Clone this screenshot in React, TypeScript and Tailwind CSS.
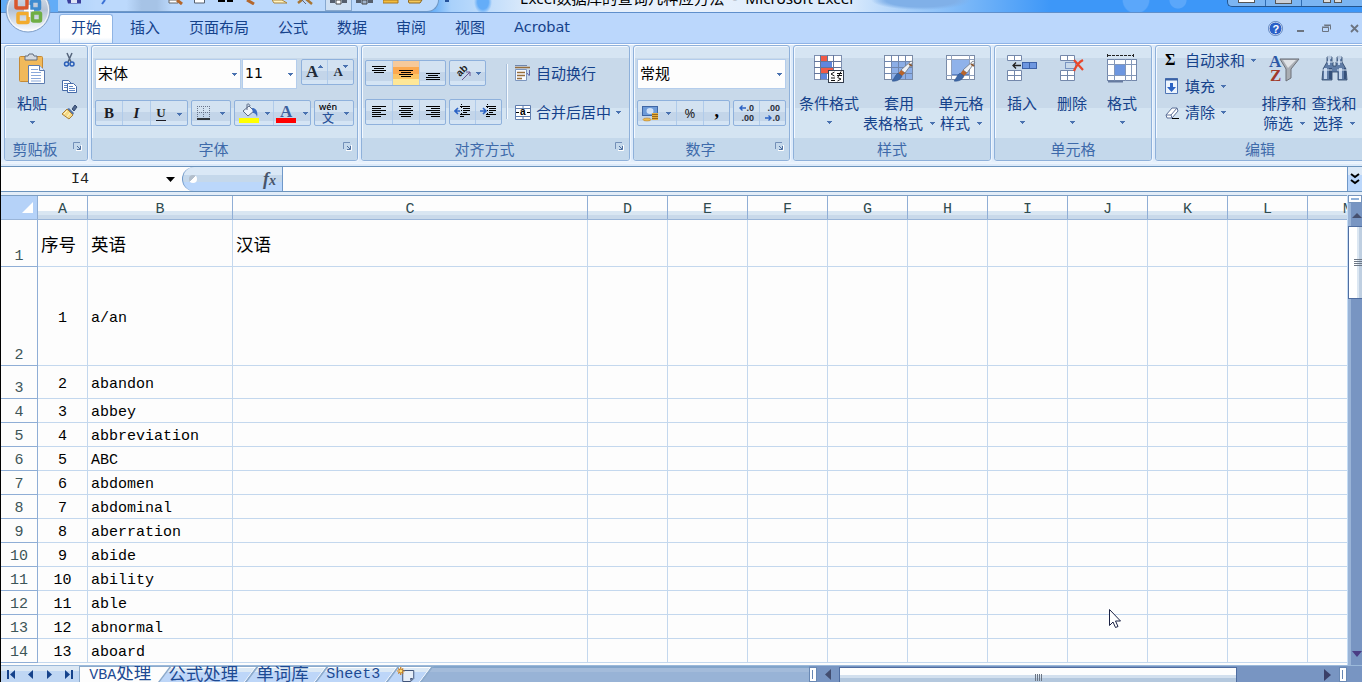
import clsx from "clsx";
import type { ReactNode } from "react";

const TABS = ["开始", "插入", "页面布局", "公式", "数据", "审阅", "视图", "Acrobat"];

const COLUMNS = [
  { name: "A", width: 50 },
  { name: "B", width: 145 },
  { name: "C", width: 355 },
  { name: "D", width: 80 },
  { name: "E", width: 80 },
  { name: "F", width: 80 },
  { name: "G", width: 80 },
  { name: "H", width: 80 },
  { name: "I", width: 80 },
  { name: "J", width: 80 },
  { name: "K", width: 80 },
  { name: "L", width: 80 },
  { name: "M", width: 80 },
];

const ROWS = [
  { height: 47, cells: ["序号", "英语", "汉语"] },
  { height: 99, cells: ["1", "a/an"] },
  { height: 33, cells: ["2", "abandon"] },
  { height: 24, cells: ["3", "abbey"] },
  { height: 24, cells: ["4", "abbreviation"] },
  { height: 24, cells: ["5", "ABC"] },
  { height: 24, cells: ["6", "abdomen"] },
  { height: 24, cells: ["7", "abdominal"] },
  { height: 24, cells: ["8", "aberration"] },
  { height: 24, cells: ["9", "abide"] },
  { height: 24, cells: ["10", "ability"] },
  { height: 24, cells: ["11", "able"] },
  { height: 24, cells: ["12", "abnormal"] },
  { height: 24, cells: ["13", "aboard"] },
];

function Arrow({ className }: { className?: string }) {
  return (
    <svg width="5" height="3" viewBox="0 0 5 3" className={clsx("shrink-0", className)} shapeRendering="crispEdges">
      <path d="M0 0h5v1H0zM1 1h3v1H1zM2 2h1v1H2z" fill="#4a72b0" />
    </svg>
  );
}

function Group({
  label,
  className,
  launcher,
  children,
}: {
  label: string;
  className: string;
  launcher?: boolean;
  children: ReactNode;
}) {
  return (
    <section
      className={clsx(
        "flex h-[116px] shrink-0 flex-col overflow-hidden rounded-[3px] border border-[#8fb1da] bg-[linear-gradient(#d6e5f3_0_12px,#c8d9ea_12px_62px,#d4e4f2_62px)] shadow-[inset_1px_1px_0_#f4f9ff,1px_1px_0_#eef5fd]",
        className,
      )}
    >
      <div className="h-[92px]">{children}</div>
      <div className="relative flex h-[22px] items-center justify-center bg-[#c4d8eb] text-[#3e6aaa]">
        <span className={launcher ? "pr-[22px]" : ""}>{label}</span>
        {launcher && (
          <svg className="absolute right-[5px] top-[4px]" width="9" height="9" viewBox="0 0 9 9" fill="none">
            <path d="M.5 7V.5H7" stroke="#7390b8" />
            <path d="M8.500 3v5.500H3" stroke="#fff" />
            <path d="M4 4l3 3M7.500 4v3.500H4" stroke="#4f70a0" />
          </svg>
        )}
      </div>
    </section>
  );
}

function ButtonBox({ className, children }: { className?: string; children: ReactNode }) {
  return (
    <div
      className={clsx(
        "flex h-[26px] shrink-0 overflow-hidden rounded-[2px] border border-[#8fb1dc] bg-[linear-gradient(#d3e2f1_0_11px,#c3d5e9_11px_20px,#d4e4f4_20px)] [&>*+*]:border-l [&>*+*]:border-[#b0cbea]",
        className,
      )}
    >
      {children}
    </div>
  );
}

function Cell({ className, children }: { className: string; children: ReactNode }) {
  return <span className={clsx("flex items-center justify-center", className)}>{children}</span>;
}

function Lines({ rows, y = 3 }: { rows: [number, number][]; y?: number }) {
  return (
    <svg width="16" height="18" viewBox="0 0 16 18" shapeRendering="crispEdges">
      {rows.map(([x, w], i) => (
        <rect key={i} x={x} y={y + i * 2} width={w} height="1" fill="#000" />
      ))}
    </svg>
  );
}

function IndentIcon({ flip }: { flip?: boolean }) {
  return (
    <svg width="17" height="18" viewBox="0 0 17 18" fill="none">
      <path d="M6 3.500h10M9 5.500h7M9 7.500h7M9 9.500h4M6 11.500h10M6 13.500h4" stroke="#000" />
      <path d="M7.500 1v15" stroke="#000" strokeDasharray="1 2" />
      <path d={flip ? "M0 8h5M3 5l3 3-3 3" : "M6 8H1M4 5L1 8l3 3"} stroke="#2b62c4" strokeWidth="1.600" />
    </svg>
  );
}

function BigButton({
  icon,
  lines,
  arrowBelow,
  className,
}: {
  icon: ReactNode;
  lines: string[];
  arrowBelow?: boolean;
  className: string;
}) {
  return (
    <div className={clsx("flex shrink-0 flex-col items-center pt-[7px] leading-5 whitespace-nowrap", className)}>
      <div className="mb-[8px] h-[32px]">{icon}</div>
      <div>{lines[0]}</div>
      <div className="flex h-5 items-center justify-center">
        {arrowBelow ? <Arrow className="-mt-0.5" /> : (
          <>
            {lines[1]}
            <Arrow className="ml-[7px]" />
          </>
        )}
      </div>
    </div>
  );
}

function Brush() {
  return (
    <g>
      <path d="M28 8l2 1-8 11-4-3z" fill="#eef1f5" stroke="#6b7480" strokeWidth=".8" />
      <path d="M26 11l3 2" stroke="#8b5a34" strokeWidth="2" />
      <path d="M18 17l4 3-3 3-4-2z" fill="#b8642b" />
      <path d="M15 20l4 3c-1 3-5 6-10 5 2-2 3-6 6-8z" fill="#3f69a8" stroke="#2b4f88" strokeWidth=".5" />
    </g>
  );
}

function CondFormatIcon() {
  return (
    <svg width="32" height="32" viewBox="0 0 32 32" fill="none" shapeRendering="crispEdges">
      <rect x="1.500" y="2.500" width="27" height="24" fill="#fff" stroke="#7d8fb0" />
      <path d="M8 3h6v6H8zM8 15h12v5H8z" fill="#f05a45" />
      <path d="M8 9h11v6H8zM8 21h6v5H8z" fill="#5f86dd" />
      <path d="M1 8.500h27M1 14.500h27M1 20.500h27M7.500 2v25M14.500 2v7M20.500 2v25" stroke="#62759b" />
      <rect x="15.500" y="17.500" width="15" height="12" fill="#fff" stroke="#333d4d" />
      <g shapeRendering="auto" stroke="#111">
        <path d="M21.500 19l-3.500 2 3.500 2M18 25h4M18 27.500h4M24 20.500h5M24 22.500h5M28 18.500l-3 5.500M24.500 24.500l3.500 1.500-3.500 2" />
      </g>
    </svg>
  );
}

function TableFormatIcon() {
  return (
    <svg width="32" height="32" viewBox="0 0 32 32" fill="none">
      <rect x="1.500" y="2.500" width="28" height="24" fill="#fff" stroke="#7b8ca8" />
      <path d="M8 8h21v18H8z" fill="#8caee6" />
      <path d="M1 8.500h28M1 14.500h28M1 20.500h28M8.500 2v25M15.500 2v25M22.500 2v25" stroke="#6f86ae" />
      <Brush />
    </svg>
  );
}

function CellStyleIcon() {
  return (
    <svg width="32" height="32" viewBox="0 0 32 32" fill="none">
      <rect x="1.500" y="2.500" width="28" height="24" fill="#fff" stroke="#7b8ca8" />
      <rect x="6.500" y="6.500" width="18" height="15" fill="#8fb2ea" stroke="#5d83c6" />
      <path d="M1 6.500h28M1 22.500h28M6.500 2v25M24.500 2v25" stroke="#8fa0bd" />
      <Brush />
    </svg>
  );
}

function InsertIcon() {
  return (
    <svg width="32" height="32" viewBox="0 0 32 32" fill="none">
      <path d="M1.500 2.500h14v5h-14zM1.500 17.500h14v10h-14z" fill="#fff" stroke="#7488ab" />
      <path d="M1 22.500h14M8.500 2v6M8.500 17v11" stroke="#7488ab" />
      <rect x="16.500" y="9.500" width="14" height="6" fill="#6e97e0" stroke="#3d62a8" />
      <path d="M23.500 9v7" stroke="#3d62a8" />
      <path d="M15 12.500H7M10 9.500l-3 3 3 3" stroke="#222" strokeWidth="1.300" />
    </svg>
  );
}

function DeleteIcon() {
  return (
    <svg width="32" height="32" viewBox="0 0 32 32" fill="none">
      <path d="M4.500 2.500h14v5h-14zM4.500 17.500h14v10h-14z" fill="#fff" stroke="#7488ab" />
      <path d="M4 22.500h14M11.500 2v6M11.500 17v11" stroke="#7488ab" />
      <path d="M9.500 9.500h10v6h-10z" stroke="#2b4f98" strokeDasharray="1 1" />
      <path d="M18 7l9 10M27 7c-4 2-7 6-9 11" stroke="#e8472b" strokeWidth="2.200" />
    </svg>
  );
}

function FormatIcon() {
  return (
    <svg width="32" height="32" viewBox="0 0 32 32" fill="none">
      <path d="M1.500 1v4M27.500 1v4M2 2.500h25" stroke="#222" strokeDasharray="3 1" />
      <rect x="1.500" y="6.500" width="29" height="21" fill="#fff" stroke="#7488ab" />
      <rect x="9" y="12" width="10" height="10" fill="#6e97e0" />
      <path d="M1 11.500h29M1 22.500h29M8.500 6v23M19.500 6v22M25.500 6v22" stroke="#8498b9" />
      <path d="M2 28.500h15" stroke="#667b9f" strokeWidth="2" />
    </svg>
  );
}

function SortIcon() {
  return (
    <svg width="32" height="32" viewBox="0 0 32 32">
      <path d="M12 6h19l-8 10v9l-5 3V16z" fill="#a9adb3" stroke="#6d7179" />
      <path d="M15 7h13l-8 8z" fill="#dfe2e6" />
      <text x="1" y="14" fontFamily="Liberation Serif, serif" fontSize="17" fontWeight="700" fill="#2c58a5">A</text>
      <text x="2" y="28" fontFamily="Liberation Serif, serif" fontSize="17" fontWeight="700" fill="#a13a2b">Z</text>
    </svg>
  );
}

function BinocularsIcon() {
  return (
    <svg width="32" height="32" viewBox="0 0 32 32">
      <path d="M9 4h5v5h1v4h3V9h1V4h5v5l4 7 1 11h-9v-8h-6v8H4l1-11 4-7z" fill="#5f7ca6" stroke="#2c4468" strokeWidth=".8" />
      <path d="M6 15h3v11H6zM21 15h3v11h-3zM10 6h2v6h-2zM20 6h2v6h-2z" fill="#c3d5ec" />
      <path d="M11 15h3v11h-3zM26 15h2v11h-2z" fill="#34507a" />
      <path d="M4 17h10M19 17h10M9 9h6M18 9h6" stroke="#dce7f5" />
      <circle cx="11.500" cy="4.500" r="2" fill="#b8c9df" />
      <circle cx="21.500" cy="4.500" r="2" fill="#b8c9df" />
    </svg>
  );
}

function PasteIcon() {
  return (
    <svg width="32" height="32" viewBox="0 0 32 32">
      <rect x="3.500" y="3.500" width="23" height="25" rx="1" fill="#f1b95a" stroke="#c58a35" />
      <path d="M9 3h3l1-2h4l1 2h3v4H9z" fill="#d3d9e0" stroke="#636d7c" />
      <path d="M12.500 12.500h11l5 5v13h-16z" fill="#fff" stroke="#5d7cb0" />
      <path d="M23.500 12.500v5h5" fill="#dce8fa" stroke="#5d7cb0" />
      <path d="M15 16.500h7M15 19.500h10M15 22.500h10M15 25.500h10M15 28h10" stroke="#8aa9da" />
    </svg>
  );
}

function ClipboardGroup() {
  return (
    <Group label="剪贴板" launcher className="w-[84px] [&_span.pr-\[22px\]]:pr-[22px]">
      <div className="flex">
        <BigButton icon={<PasteIcon />} lines={["粘贴"]} arrowBelow className="w-[54px]" />
        <div className="flex flex-col gap-[9px] pt-[6px] pl-[2px]">
          <svg width="17" height="17" viewBox="0 0 17 17" fill="none">
            <path d="M6 1l4 9M11 1L7 10" stroke="#55657c" strokeWidth="1.500" />
            <circle cx="5.500" cy="12" r="2" stroke="#2b5fb8" strokeWidth="1.500" />
            <circle cx="11" cy="12" r="2" stroke="#2b5fb8" strokeWidth="1.500" />
          </svg>
          <svg width="17" height="17" viewBox="0 0 17 17">
            <path d="M1.500 2.500h6l3 3v7h-9z" fill="#fff" stroke="#476ba8" />
            <path d="M6.500 5.500h6l3 3v6h-9z" fill="#fff" stroke="#476ba8" />
            <path d="M3 5.500h3M3 7.500h3M3 9.500h3M8 8.500h4M8 10.500h6M8 12.500h6" stroke="#5f86c4" />
          </svg>
          <svg width="17" height="17" viewBox="0 0 17 17">
            <path d="M11 5l3-4 2 2-3 4z" fill="#50678e" stroke="#344a70" />
            <path d="M8 4l5 5-1 2-6-6z" fill="#5775a6" />
            <path d="M6 5l6 6-4 4-7-5z" fill="#f4d985" stroke="#a97d38" />
            <path d="M3 10l3-3M6 13l3-4" stroke="#fff4c8" />
          </svg>
        </div>
      </div>
    </Group>
  );
}

function FontGroup() {
  return (
    <Group label="字体" launcher className="w-[267px]">
      <div className="flex h-[42px] items-start pl-[3px] pt-[13px]">
        <div className="flex h-[30px] w-[146px] items-center justify-between border border-[#b4cdec] bg-[#fdfdfd] pl-[2px] pr-[3px] pb-[2px] text-black">
          宋体
          <Arrow className="mt-[3px]" />
        </div>
        <div className="ml-px flex h-[30px] w-[55px] items-center justify-between border border-[#b4cdec] bg-[#fdfdfd] pl-[2px] pr-[3px] pb-[2px] font-['DejaVu_Sans',sans-serif] text-[14px] text-black">
          11
          <Arrow className="mt-[3px]" />
        </div>
        <ButtonBox className="ml-1 w-[53px]">
          <Cell className="w-[26px] font-['Liberation_Serif',serif] text-[17px] font-bold text-[#222b38]">
            A<Arrow className="mb-3 rotate-180" />
          </Cell>
          <Cell className="w-[26px] font-['Liberation_Serif',serif] text-[13px] font-bold text-[#222b38]">
            A<Arrow className="mb-3" />
          </Cell>
        </ButtonBox>
      </div>
      <div className="flex items-start gap-[3px] pl-[3px] pt-[12px]">
        <ButtonBox className="w-[93px] font-['Liberation_Serif',serif] text-[16px] font-bold text-[#1c1c24]">
          <Cell className="w-[26px] text-[15px]">B</Cell>
          <Cell className="w-[28px] text-[15px] italic">I</Cell>
          <Cell className="w-[37px] gap-[11px]">
            <span className="border-b border-[#1c1c24] text-[13px] leading-[14px]">U</span>
            <Arrow className="mt-0.5" />
          </Cell>
        </ButtonBox>
        <ButtonBox className="w-[40px]">
          <Cell className="w-full gap-[9px]">
            <svg width="14" height="14" viewBox="0 0 14 14">
              <path d="M.5 0v12M6.500 0v12M12.500 0v12M0 .5h13M0 6.500h13" stroke="#69758c" strokeDasharray="1 1" />
              <path d="M0 13h13" stroke="#000" strokeWidth="1.500" />
            </svg>
            <Arrow />
          </Cell>
        </ButtonBox>
        <ButtonBox className="w-[77px]">
          <Cell className="w-[38px] gap-[6px]">
            <svg width="21" height="20" viewBox="0 0 21 20">
              <path d="M5 8l6-5 5 5-6 5z" fill="#eef3fa" stroke="#5c6b86" />
              <path d="M9 7V2c0-2 3-1 3 1" fill="none" stroke="#5c6b86" />
              <path d="M14 5c5 0 6 5 5 9-1-3-2-4-4-4z" fill="#3f6ec0" />
              <path d="M1 15h20v5H1z" fill="#ff0" />
            </svg>
            <Arrow />
          </Cell>
          <Cell className="w-[37px] gap-[7px]">
            <svg width="20" height="20" viewBox="0 0 20 20">
              <text x="4" y="14" fontFamily="Liberation Serif, serif" fontSize="17" fontWeight="700" fill="#3d5f9c">A</text>
              <path d="M0 15h20v5H0z" fill="red" />
            </svg>
            <Arrow />
          </Cell>
        </ButtonBox>
        <ButtonBox className="w-[40px]">
          <Cell className="w-full gap-[7px]">
            <span className="flex flex-col items-center text-[12px] font-medium leading-[14px] text-[#2b5399]">
              <span className="font-['Noto_Sans',sans-serif] text-[9px] leading-[9px] text-black">wén</span>文
            </span>
            <Arrow />
          </Cell>
        </ButtonBox>
      </div>
    </Group>
  );
}

function AlignGroup() {
  return (
    <Group label="对齐方式" launcher className="w-[269px]">
      <div className="flex">
        <div className="w-[144px] pl-[3px] pt-[14px]">
          <div className="flex gap-[3px]">
            <ButtonBox className="w-[81px]">
              <Cell className="w-[26px]"><Lines rows={[[1, 14], [3, 10], [1, 14], [3, 10]]} y={2} /></Cell>
              <Cell className="w-[27px] bg-[linear-gradient(#f6c99a_0_6px,#fca94f_6px_13px,#fcc564_13px_18px,#fee797_18px)]">
                <Lines rows={[[1, 14], [3, 10], [1, 14], [3, 10]]} y={6} />
              </Cell>
              <Cell className="w-[26px]"><Lines rows={[[1, 14], [3, 10], [1, 14], [1, 14]]} y={9} /></Cell>
            </ButtonBox>
            <ButtonBox className="w-[37px]">
              <Cell className="w-full gap-[4px]">
                <svg width="17" height="18" viewBox="0 0 17 18">
                  <text transform="translate(5 13) rotate(-45)" fontFamily="Liberation Sans, sans-serif" fontSize="10" fontWeight="700" fill="#222">ab</text>
                  <path d="M7 16l8-8M15 12V8h-4" fill="none" stroke="#6a5590" />
                </svg>
                <Arrow />
              </Cell>
            </ButtonBox>
          </div>
          <div className="mt-[13px] flex gap-[3px]">
            <ButtonBox className="w-[81px]">
              <Cell className="w-[26px]"><Lines rows={[[1, 14], [1, 9], [1, 14], [1, 9], [1, 14], [1, 9]]} /></Cell>
              <Cell className="w-[27px]"><Lines rows={[[1, 14], [3, 10], [1, 14], [3, 10], [1, 14], [3, 10]]} /></Cell>
              <Cell className="w-[26px]"><Lines rows={[[1, 14], [6, 9], [1, 14], [6, 9], [1, 14], [6, 9]]} /></Cell>
            </ButtonBox>
            <ButtonBox className="w-[53px]">
              <Cell className="w-[26px]"><IndentIcon /></Cell>
              <Cell className="w-[26px]"><IndentIcon flip /></Cell>
            </ButtonBox>
          </div>
        </div>
        <div className="mt-[18px] h-[55px] w-[2px] border-l border-[#a9c0dc] bg-[#f7fbff]" />
        <div className="flex flex-col gap-[15px] pl-[7px] pt-[15px] leading-6">
          <div className="flex items-center gap-[5px]">
            <svg width="16" height="16" viewBox="0 0 16 16" fill="none">
              <path d="M.5 4.500h11v11H.5z" fill="#f7faff" stroke="#7b95be" />
              <path d="M0 2.500h15M2 7.500h8M2 10.500h8M2 13.500h5" stroke="#966e3c" strokeWidth="1.500" />
              <path d="M0 .5h12" stroke="#6f86ad" />
              <path d="M14.500 5v5M12 8l2.500 3" stroke="#5c62a8" />
            </svg>
            自动换行
          </div>
          <div className="flex items-center gap-[5px]">
            <svg width="16" height="15" viewBox="0 0 16 15">
              <path d="M.5.5h15v14H.5z" fill="#fff" stroke="#5f7dae" />
              <path d="M0 3.500h16M0 11.500h16M8 0v3M8 12v3" stroke="#5f7dae" />
              <text x="5" y="10" fontFamily="Liberation Sans, sans-serif" fontSize="10" fontWeight="700">a</text>
              <path d="M1 7.500h3M12 7.500h3" stroke="#000" />
            </svg>
            合并后居中
            <Arrow />
          </div>
        </div>
      </div>
    </Group>
  );
}

function NumberGroup() {
  return (
    <Group label="数字" launcher className="w-[157px]">
      <div className="px-[3px] pt-[13px]">
        <div className="flex h-[30px] w-[149px] items-center justify-between border border-[#b4cdec] bg-[#fdfdfd] pl-[2px] pr-[3px] pb-[2px] text-black">
          常规
          <Arrow className="mt-[3px]" />
        </div>
        <div className="mt-[11px] flex gap-[3px]">
          <ButtonBox className="w-[93px]">
            <Cell className="w-[38px] gap-[6px]">
              <svg width="18" height="18" viewBox="0 0 18 18">
                <rect x=".5" y="2.500" width="15" height="9" fill="#6e9bd8" stroke="#3f66a5" />
                <ellipse cx="8" cy="7" rx="3.500" ry="3" fill="#cfe0f6" />
                <path d="M10 9h6v7h-6z" fill="#e6ae3e" />
                <path d="M10 10.500h6M10 12.500h6M10 14.500h6" stroke="#9a681b" />
                <ellipse cx="5" cy="15.500" rx="4" ry="1.500" fill="#efbb4d" stroke="#a8742a" strokeWidth=".5" />
              </svg>
              <Arrow />
            </Cell>
            <Cell className="w-[28px] font-['Noto_Sans',sans-serif] text-[13px] text-[#222]">%</Cell>
            <Cell className="w-[26px] pb-[5px] font-['Liberation_Serif',serif] text-[18px] font-bold leading-[18px] text-black">,</Cell>
          </ButtonBox>
          <ButtonBox className="w-[53px] font-['Liberation_Sans',sans-serif] text-[9px] font-bold leading-[10px] text-[#2a2f3a]">
            <Cell className="w-[26px]">
              <span className="flex flex-col items-end">
                <span className="flex items-center">
                  <svg width="7" height="6" viewBox="0 0 7 6" fill="none"><path d="M7 3H1M3.500.5L1 3l2.500 2.500" stroke="#2b62c4" strokeWidth="1.400" /></svg>.0
                </span>
                <span>.00</span>
              </span>
            </Cell>
            <Cell className="w-[26px]">
              <span className="flex flex-col items-end">
                <span>.00</span>
                <span className="flex items-center">
                  <svg width="7" height="6" viewBox="0 0 7 6" fill="none"><path d="M0 3h6M3.500.5L6 3 3.500 5.500" stroke="#2b62c4" strokeWidth="1.400" /></svg>.0
                </span>
              </span>
            </Cell>
          </ButtonBox>
        </div>
      </div>
    </Group>
  );
}

function EditGroup() {
  return (
    <Group label="编辑" className="w-[210px]">
      <div className="flex">
        <div className="flex w-[101px] flex-col gap-[2px] pl-[9px] pt-[2px] leading-6">
          <div className="flex items-center">
            <span className="w-[20px] font-['Liberation_Serif',serif] text-[16px] font-bold text-black">Σ</span>
            自动求和
            <Arrow className="ml-[6px]" />
          </div>
          <div className="flex items-center">
            <svg width="13" height="16" viewBox="0 0 13 16" className="mr-[7px]">
              <path d="M.5.5h12v15H.5z" fill="#edf4fd" stroke="#4f75b5" />
              <path d="M0 1.500h13" stroke="#3b62a5" strokeWidth="2" />
              <path d="M5 5h3v4h3l-4.500 5L2 9h3z" fill="#2b62c4" />
            </svg>
            填充
            <Arrow className="ml-[6px]" />
          </div>
          <div className="flex items-center">
            <svg width="14" height="13" viewBox="0 0 14 13" className="mr-[6px]">
              <path d="M1 9l6-7h5l1 3-6 7H2z" fill="#fff" stroke="#5d7199" />
              <path d="M1 9h5l6-7M6 9l1 3" stroke="#5d7199" fill="none" />
              <path d="M7 12.500h7" stroke="#000" />
            </svg>
            清除
            <Arrow className="ml-[6px]" />
          </div>
        </div>
        <BigButton icon={<SortIcon />} lines={["排序和", "筛选"]} className="ml-[2px] w-[50px]" />
        <BigButton icon={<BinocularsIcon />} lines={["查找和", "选择"]} className="w-[50px]" />
      </div>
    </Group>
  );
}

function Ribbon() {
  return (
    <div className="flex h-[121px] gap-[3px] border-t border-[#8fb3e6] bg-[linear-gradient(#fdfeff_0_1px,#dceafa_1px_115px,#eef5fd)] pl-[3px] pt-px leading-5">
      <ClipboardGroup />
      <FontGroup />
      <AlignGroup />
      <NumberGroup />
      <Group label="样式" className="w-[198px]">
        <div className="flex">
          <BigButton icon={<CondFormatIcon />} lines={["条件格式"]} arrowBelow className="ml-[5px] w-[60px]" />
          <BigButton icon={<TableFormatIcon />} lines={["套用", "表格格式"]} className="ml-[4px] w-[72px]" />
          <BigButton icon={<CellStyleIcon />} lines={["单元格", "样式"]} className="ml-[2px] w-[48px]" />
        </div>
      </Group>
      <Group label="单元格" className="w-[158px]">
        <div className="flex pl-[2px]">
          <BigButton icon={<InsertIcon />} lines={["插入"]} arrowBelow className="w-[50px]" />
          <BigButton icon={<DeleteIcon />} lines={["删除"]} arrowBelow className="w-[50px]" />
          <BigButton icon={<FormatIcon />} lines={["格式"]} arrowBelow className="w-[50px]" />
        </div>
      </Group>
      <EditGroup />
    </div>
  );
}

function QuickAccess() {
  return (
    <div className="flex h-[12px] w-[381px] items-start rounded-br-[14px] border-b border-r border-[#6f98c6] bg-[linear-gradient(90deg,#a9cffb,#bcd9fc_10%,#bcd9fc_18%,#a6c3e6_22%,#a6c3e6_26%,#bcd9fc_30%,#bcd9fc)] pl-[9px]">
      <svg width="14" height="4" viewBox="0 0 14 4"><path d="M0 0h14v3.500H1z" fill="#3b3f9c" /><path d="M4 0h6v3H4z" fill="#dfe5f5" /></svg>
      <svg width="8" height="5" viewBox="0 0 8 5" className="ml-[18px]"><path d="M6 0L3 4" stroke="#3b72d6" strokeWidth="2" /></svg>
      <svg width="16" height="5" viewBox="0 0 16 5" className="ml-[61px]"><path d="M1 0h9v3H1z" fill="#fff" stroke="#666" /><path d="M9 0l5 4" stroke="#b4672c" strokeWidth="3" /></svg>
      <svg width="11" height="4" viewBox="0 0 11 4" className="ml-[10px]"><path d="M.5-1h10v4H.5z" fill="#fff" stroke="#56606e" /></svg>
      <svg width="16" height="3" viewBox="0 0 16 3" className="ml-[13px]"><path d="M0 0h7v2H0zM9 0h6v2H9z" fill="#000" /></svg>
      <svg width="10" height="5" viewBox="0 0 10 5" className="ml-[12px]"><path d="M1 0l7 4" stroke="#b4672c" strokeWidth="3" /></svg>
      <svg width="16" height="5" viewBox="0 0 16 5" className="ml-[16px]"><path d="M0 0h10l5 3H2z" fill="#fff3c0" stroke="#a8843e" /></svg>
      <svg width="17" height="5" viewBox="0 0 17 5" className="ml-[9px]"><path d="M1 3l5-4M9-1l6 5" stroke="#a87634" strokeWidth="2.500" /><path d="M5 0l4 4" stroke="#667" /></svg>
      <span className="ml-[11px] flex h-[11px] w-[27px] justify-center border border-t-0 border-[#87a8cf] bg-[#cfe0f3]">
        <svg width="17" height="5" viewBox="0 0 17 5"><path d="M0 0h5v3H0zM12 0h5v3h-5z" fill="#555e6c" /><path d="M6 0h5v4H6z" fill="#fff" stroke="#444" /></svg>
      </span>
      <svg width="17" height="5" viewBox="0 0 17 5" className="ml-[4px]"><path d="M0 0h5v3H0zM12 0h5v3h-5z" fill="#555e6c" /><path d="M6 0h5v4H6z" fill="#9fb3cc" stroke="#444" /></svg>
      <svg width="16" height="4" viewBox="0 0 16 4" className="ml-[10px]"><path d="M0 0h15v3H0z" fill="#f3bd3e" stroke="#a87621" /></svg>
      <svg width="16" height="4" viewBox="0 0 16 4" className="ml-[9px]"><path d="M0 0h14l-2 3H1z" fill="#f6c95c" stroke="#8d671f" /></svg>
    </div>
  );
}

function TitleBar() {
  return (
    <div className="relative flex h-[13px] items-start overflow-hidden border-b border-[#5f8fcb] bg-[radial-gradient(ellipse_9px_12px_at_482px_2px,#64adf8_60%,transparent),radial-gradient(ellipse_50px_10px_at_920px_0,#80b0e8_70%,transparent),radial-gradient(circle_14px_at_1135px_0,#5ba7fa_90%,transparent),radial-gradient(circle_9px_at_1177px_0,#5ba7fa_90%,transparent),linear-gradient(90deg,#62acf7_0_430px,#a9d1fb_450px,#c9e1fb_500px,#e6effa_540px,#e8f1fc_700px,#d8e9fc_850px,#7db9f8_960px,#3d97f8_1050px)] pl-[57px]">
      <QuickAccess />
      <span className="ml-[6px] h-[2px] w-[4px] bg-[#24529b]" />
      <div className="ml-[71px] -mt-[14px] whitespace-pre font-['Noto_Sans','Noto_Sans_CJK_SC',sans-serif] text-[15.300px] leading-[24px] text-black">
        Excel数据库的查询几种应方法  -  Microsoft Excel
      </div>
      <div className="absolute right-0 top-0 flex h-[7px] w-[135px] rounded-bl-[5px] border-b border-l border-[#23558f] bg-[#7bb5f2]">
        <span className="flex w-[38px] justify-center border-r border-[#2f6cb2]"><i className="h-[3px] w-[17px] border border-t-0 border-[#555] bg-white" /></span>
        <span className="flex w-[36px] justify-center border-r border-[#2f6cb2]"><i className="h-[4px] w-[17px] border border-t-0 border-[#555] bg-[#c9ced6]" /></span>
        <span className="flex flex-1 justify-center gap-[3px]"><i className="h-[3px] w-[8px] border border-t-0 border-[#555] bg-[#ddd]" /><i className="h-[3px] w-[8px] border border-t-0 border-[#555] bg-[#ddd]" /></span>
      </div>
    </div>
  );
}

function OfficeOrb() {
  return (
    <svg className="absolute left-[4px] top-0 z-10" width="46" height="33" viewBox="0 0 46 33">
      <defs>
        <linearGradient id="orb" x1="0" y1="0" x2="0" y2="1">
          <stop offset="0" stopColor="#e4e9f0" />
          <stop offset=".5" stopColor="#b5c3d6" />
          <stop offset="1" stopColor="#fbfdff" />
        </linearGradient>
      </defs>
      <circle cx="23" cy="10" r="22" fill="url(#orb)" stroke="#7f9fc8" />
      <circle cx="23" cy="10" r="20.500" fill="none" stroke="#fff" opacity=".8" />
      <g fill="none" strokeWidth="3.500">
        <rect x="11" y="-4" width="11" height="12" rx="1" stroke="#d9572c" />
        <rect x="26.500" y="1" width="8" height="8" rx="1" stroke="#3d8bd0" />
        <rect x="13" y="13.500" width="10" height="9" rx="1" stroke="#f2ab2d" />
        <rect x="27.500" y="13" width="8" height="8" rx="1" stroke="#6fae45" />
      </g>
      <path d="M19 10.500h10M24.500 5v12" stroke="#fff" strokeWidth="1.500" />
    </svg>
  );
}

function TabBar() {
  return (
    <div className="flex h-[30px] items-center justify-between bg-[#bbd7fc]">
      <div className="flex h-full items-center gap-[29px] pl-[70px]">
        {TABS.map((tab, i) => (
          <span
            key={tab}
            className={
              i === 0
                ? "-mx-[12px] flex h-[29px] items-center self-end rounded-t-[3px] border border-b-0 border-[#8fb4e4] bg-[linear-gradient(#fff_80%,#e3effb)] px-[11px] pb-[3px]"
                : i === 7 ? "pb-px font-['DejaVu_Sans',sans-serif] text-[14.500px]" : "pb-px"
            }
          >
            {tab}
          </span>
        ))}
      </div>
      <div className="flex items-center pr-[3px]">
        <svg width="15" height="15" viewBox="0 0 15 15">
          <circle cx="7.500" cy="7.500" r="6.500" fill="#2b60c8" stroke="#f4f8ff" />
          <circle cx="7.500" cy="7.500" r="7" fill="none" stroke="#3d67ab" strokeWidth=".8" />
          <text x="4.500" y="11.500" fontFamily="Liberation Sans, sans-serif" fontSize="11" fontWeight="700" fill="#fff">?</text>
        </svg>
        <span className="ml-[14px] mt-[5px] h-[2px] w-[7px] bg-[#6c7480]" />
        <svg width="10" height="8" viewBox="0 0 10 8" className="ml-[18px]">
          <path d="M2.500 1.500h6v4M.5 3.500h6v4h-6z" fill="none" stroke="#6c7480" />
          <path d="M2 1h7M0 3h7" stroke="#6c7480" />
        </svg>
        <svg width="9" height="9" viewBox="0 0 9 9" className="ml-[18px]">
          <path d="M1 1l7 7M8 1L1 8" stroke="#6c7480" strokeWidth="1.800" />
        </svg>
      </div>
    </div>
  );
}

function FormulaBar() {
  return (
    <div className="bg-[linear-gradient(#9fbee6_0_1px,#c6dcf6_1px_2px)]">
      <div className="mt-[2px] flex h-[26px] border-y border-[#6c94bd] bg-[#fdfdfd]">
        <div className="flex w-[181px] items-center justify-end pr-[7px] font-['Liberation_Mono',monospace] text-[15px] text-[#222]">
          <span className="mr-[77px] pt-[3px]">I4</span>
          <svg width="9" height="5" viewBox="0 0 9 5"><path d="M0 0h9L4.500 5z" /></svg>
        </div>
        <div className="flex h-full w-[101px] items-center justify-between rounded-l-full border-l border-r border-[#6f98c9] bg-[linear-gradient(#dae8f6_0_8px,#c5d8eb_8px_15px,#bbd7fb_15px)] pl-[6px] pr-[6px]">
          <span className="h-2 w-2 rounded-full bg-[linear-gradient(135deg,#b3bfcc_50%,#fff_50%)]" />
          <span className="font-['Liberation_Serif',serif] text-[18px] font-bold italic text-[#47546b]">
            f<span className="text-[14px]">x</span>
          </span>
        </div>
        <div className="flex-1" />
        <div className="flex w-[15px] items-center justify-center border-l border-[#6f98c9] bg-[linear-gradient(#dce9f7_0_8px,#bbd7fb_8px)]">
          <svg width="10" height="12" viewBox="0 0 10 12" fill="none" stroke="#000" strokeWidth="2"><path d="M1 1l4 3 4-3M1 7l4 3 4-3" /></svg>
        </div>
      </div>
      <div className="h-[3px] bg-[#e3edf8]" />
    </div>
  );
}

function Sheet() {
  return (
    <div className="h-[470px] w-[1346px] overflow-hidden border-t border-[#7d9fc4] bg-[#fdfdfd] font-['Liberation_Mono','Noto_Sans_CJK_SC',monospace] text-[15px]">
      <div className="flex h-[24px] w-[1400px] border-b border-[#9ab5d8] bg-[linear-gradient(#fdfdfd_0_15px,#d9e6f2_15px_19px,#c9d9ea_19px)]">
        <div className="flex w-[37px] items-start justify-end border-r border-[#8faed6] bg-[#b5d2f8] pr-[4px] pt-[6px]">
          <svg width="11" height="11" viewBox="0 0 11 11"><path d="M11 0v11H0z" fill="#fff" /></svg>
        </div>
        {COLUMNS.map((col) => (
          <div
            key={col.name}
            className="flex shrink-0 items-center justify-center border-r border-[#8faed6] pt-[5px] text-[#2f4b50]"
            style={{ width: col.width }}
          >
            {col.name}
          </div>
        ))}
      </div>
      {ROWS.map((row, r) => (
        <div key={r} className="flex w-[1400px]" style={{ height: row.height }}>
          <div className="flex w-[37px] shrink-0 items-end justify-center border-b border-r border-[#8faed6] leading-[18px] text-[#3d5558]">
            {r + 1}
          </div>
          {COLUMNS.map((col, c) => (
            <div
              key={col.name}
              className={clsx(
                "flex shrink-0 items-center border-b border-r border-[#c4d8ee] pt-[5px] leading-[18px] text-black",
                c === 0 && r > 0 ? "justify-center" : "pl-[3px]",
                r === 0 && "text-[17.500px]",
              )}
              style={{ width: col.width }}
            >
              {row.cells[c]}
            </div>
          ))}
        </div>
      ))}
    </div>
  );
}

function VerticalScroll() {
  return (
    <div className="flex h-[470px] w-[15px] flex-col border-l border-[#c4dcf5] bg-[linear-gradient(90deg,#9ab4d7_0_3px,#7895c2_3px)]">
      <div className="h-[8px] border border-[#7795bd] bg-white p-[2px]"><div className="h-[2px] bg-[#8fb0d8]" /></div>
      <div className="flex h-[23px] items-center justify-end">
        <svg width="10" height="6" viewBox="0 0 10 6"><path d="M0 6l5-5 5 5z" fill="#46506f" /></svg>
      </div>
      <div className="flex h-[73px] items-center justify-end border border-r-0 border-[#4f6da0] bg-[linear-gradient(90deg,#fff_0_8px,#dce7f2_8px_10px,#bfcfe1_10px)]">
        <div className="flex w-[8px] flex-col gap-px">
          <i className="h-px bg-[#6c7684]" /><i className="h-px bg-[#6c7684]" /><i className="h-px bg-[#6c7684]" /><i className="h-px bg-[#6c7684]" />
        </div>
      </div>
      <div className="flex flex-1 items-end justify-end pb-[8px]">
        <svg width="10" height="6" viewBox="0 0 10 6"><path d="M0 0h10L5 6z" fill="#4b3d84" /></svg>
      </div>
    </div>
  );
}

function SheetTab({ className, children }: { className: string; children: ReactNode }) {
  return (
    <div className={clsx("flex shrink-0 origin-center -skew-x-[37deg] items-center justify-center border-r-2 border-t border-[#8caacb]", className)}>
      <span className="flex skew-x-[37deg] items-baseline whitespace-nowrap">{children}</span>
    </div>
  );
}

function NavIcon({ d }: { d: string }) {
  return <svg width="9" height="9" viewBox="0 0 9 9"><path d={d} fill="#15428b" /></svg>;
}

function BottomBar() {
  const idle = "bg-[linear-gradient(#dce9f5_0_5px,#bdd6f8_5px)] shadow-[inset_-1px_1px_0_#fff]";
  return (
    <div className="flex h-[17px] overflow-hidden border-t border-[#9bb9da] bg-[linear-gradient(#82a4ca_0_2px,#a3bbda_2px_6px,#98b3d6_6px)]">
      <div className="z-10 flex w-[79px] shrink-0 items-center justify-between border-r border-[#8caacb] bg-[linear-gradient(#dce8f4_0_5px,#bfd6f3_5px)] px-[6px]">
        <NavIcon d="M0 0h2v9H0zM8 0v9L3 4.500z" />
        <NavIcon d="M7 0v9L2 4.500z" />
        <NavIcon d="M2 0v9l5-4.500z" />
        <NavIcon d="M7 0h2v9H7zM1 0v9l5-4.500z" />
      </div>
      <div className="flex h-[16px] flex-1 font-['Liberation_Mono','Noto_Sans_CJK_SC',monospace] text-[17.500px] leading-5 text-[#1d4a93]">
        <SheetTab className="-ml-[10px] w-[96px] bg-[#fdfdfd] pl-[9px]"><span className="text-[15px]">VBA</span>处理</SheetTab>
        <SheetTab className={clsx("w-[87px] pr-[9px]", idle)}>公式处理</SheetTab>
        <SheetTab className={clsx("w-[70px] pr-[8px]", idle)}>单词库</SheetTab>
        <SheetTab className={clsx("w-[71px] pr-[6px]", idle)}><span className="text-[15px]">Sheet3</span></SheetTab>
        <SheetTab className={clsx("w-[34px] pr-[7px]", idle)}>
          <svg width="20" height="16" viewBox="0 0 20 16">
            <path d="M6.500 3.500h11v8l-3 3h-8z" fill="#e5edf8" stroke="#40547a" />
            <path d="M17 11h-3v3" fill="#40547a" />
            <path d="M4.500 0v8M.5 4h8M2 1.500l5 5M7 1.500l-5 5" stroke="#c77b1c" strokeWidth="1.200" />
            <circle cx="4.500" cy="4" r="1.500" fill="#ffe27a" />
          </svg>
        </SheetTab>
      </div>
      <div className="flex w-[553px] shrink-0 items-stretch bg-[#7895c2] pt-px">
        <div className="w-[8px] border border-[#6888b4] bg-white p-[2px]"><div className="h-full w-px bg-[#6888b4]" /></div>
        <div className="flex w-[22px] items-center justify-center">
          <svg width="6" height="11" viewBox="0 0 6 11"><path d="M6 0v11L0 5.500z" fill="#434e70" /></svg>
        </div>
        <div className="flex w-[398px] items-center justify-center gap-px border border-b-0 border-[#4f6da0] bg-[linear-gradient(#fdfdfd_0_7px,#d3e0ee_7px_10px,#b4c8de_10px)] pt-1">
          <i className="h-[7px] w-px bg-[#6c7684]" /><i className="h-[7px] w-px bg-[#6c7684]" /><i className="h-[7px] w-px bg-[#6c7684]" /><i className="h-[7px] w-px bg-[#6c7684]" />
        </div>
        <div className="flex flex-1 items-center justify-end pr-[8px]">
          <svg width="7" height="12" viewBox="0 0 7 12"><path d="M0 0v12l7-6z" fill="#3a3f68" /></svg>
        </div>
        <div className="mr-[15px] w-[8px] border border-[#6888b4] bg-white p-[2px]"><div className="h-full w-px bg-[#6888b4]" /></div>
      </div>
    </div>
  );
}

export default function App() {
  return (
    <div className="relative h-[682px] w-[1362px] overflow-hidden border-l border-black bg-[#dceafa] font-['Noto_Sans_CJK_SC',sans-serif] text-[15px] text-[#15428b]">
      <OfficeOrb />
      <TitleBar />
      <TabBar />
      <Ribbon />
      <FormulaBar />
      <div className="flex">
        <Sheet />
        <VerticalScroll />
      </div>
      <BottomBar />
      <svg className="absolute left-[1108px] top-[609px]" width="12" height="20" viewBox="0 0 12 20">
        <path d="M.5.5v16l3.500-3.500 2.500 5.500 2.500-1-2.500-5.500h5z" fill="#fff" stroke="#1b2244" />
      </svg>
    </div>
  );
}
